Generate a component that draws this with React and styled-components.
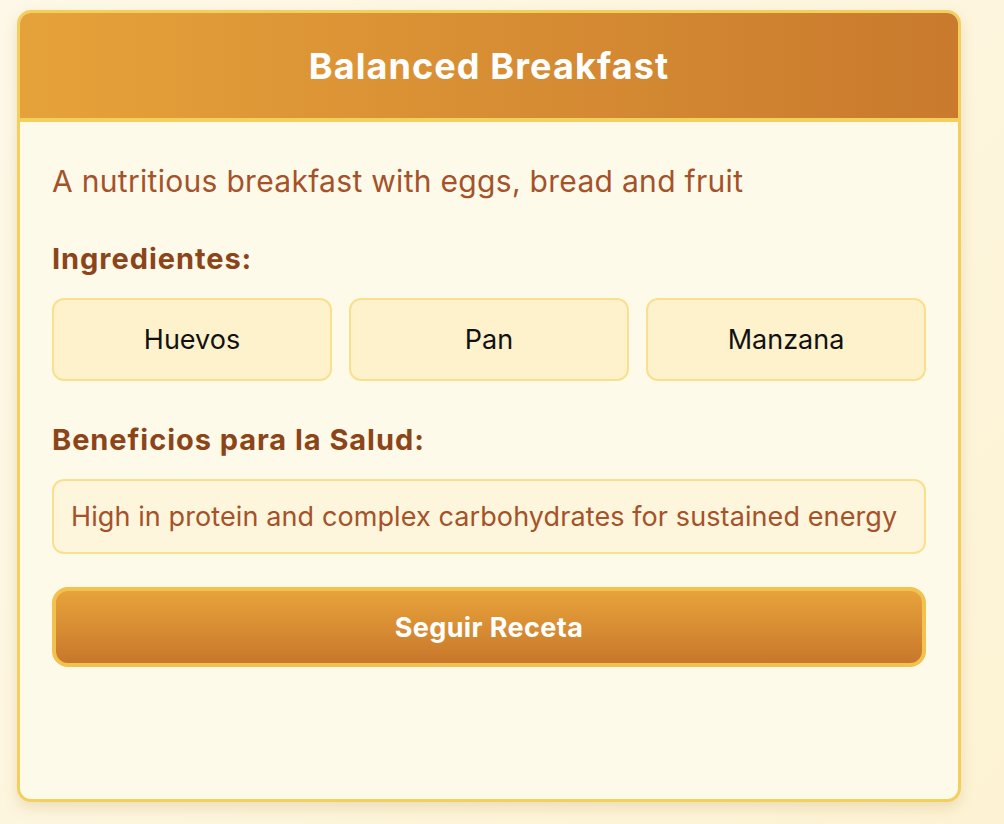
import styled, { createGlobalStyle } from 'styled-components';

const GlobalStyle = createGlobalStyle`
  html, body {
    margin: 0;
    padding: 0;
  }
  body {
    min-height: 824px;
    background: linear-gradient(135deg, #fdf8e8 0%, #fdf3d4 100%);
    font-family: Inter, 'Noto Sans', 'Liberation Sans', sans-serif;
  }
`;

const Page = styled.div`
  padding: 10px 0 0 17px;
`;

const Card = styled.div`
  width: 944px;
  height: 792px;
  box-sizing: border-box;
  border: 3px solid #f3cf5e;
  border-radius: 14px;
  background: #fefaea;
  overflow: hidden;
  box-shadow: 0 6px 14px rgba(180, 140, 60, 0.22);
  display: flex;
  flex-direction: column;
`;

const Header = styled.div`
  height: 105px;
  flex-shrink: 0;
  display: flex;
  align-items: center;
  justify-content: center;
  background: linear-gradient(90deg, #e6a23a 0%, #c97a2d 100%);
  border-bottom: 4px solid #f3cf5e;
`;

const Title = styled.h1`
  margin: 0;
  color: #fff;
  font-size: 36px;
  font-weight: 700;
  letter-spacing: 1.1px;
`;

const Body = styled.div`
  padding: 40px 32px 32px;
  display: flex;
  flex-direction: column;
`;

const Description = styled.p`
  margin: 0 0 40px;
  color: #a5522a;
  font-size: 30px;
  letter-spacing: 0.3px;
  line-height: 38px;
`;

const SectionTitle = styled.h2`
  margin: 0 0 20px;
  color: #8b4519;
  font-size: 29px;
  font-weight: 700;
  letter-spacing: 0.95px;
  line-height: 38px;
`;

const ChipGrid = styled.div`
  display: grid;
  grid-template-columns: repeat(3, 1fr);
  gap: 17px;
  margin-bottom: 40px;
`;

const Chip = styled.div`
  height: 83px;
  box-sizing: border-box;
  display: flex;
  align-items: center;
  justify-content: center;
  background: #fdf2cc;
  border: 2px solid #f8e08e;
  border-radius: 12px;
  color: #111;
  font-size: 27px;
`;

const Benefit = styled.div`
  height: 75px;
  box-sizing: border-box;
  display: flex;
  align-items: center;
  padding: 0 17px;
  background: #fdf6dc;
  border: 2px solid #f8e08e;
  border-radius: 12px;
  color: #a5522a;
  font-size: 27px;
  letter-spacing: 0.1px;
  margin-bottom: 33px;
`;

const Button = styled.button`
  height: 80px;
  width: 100%;
  box-sizing: border-box;
  border: 4px solid #f2c14e;
  border-radius: 16px;
  background: linear-gradient(180deg, #e8a33b 0%, #c8772b 100%);
  color: #fff;
  font-family: inherit;
  font-size: 27px;
  font-weight: 700;
  letter-spacing: 0.4px;
  cursor: pointer;
`;

const ingredients = ['Huevos', 'Pan', 'Manzana'];

export default function App() {
  return (
    <>
      <GlobalStyle />
      <Page>
        <Card>
          <Header>
            <Title>Balanced Breakfast</Title>
          </Header>
          <Body>
            <Description>A nutritious breakfast with eggs, bread and fruit</Description>
            <SectionTitle>Ingredientes:</SectionTitle>
            <ChipGrid>
              {ingredients.map((item) => (
                <Chip key={item}>{item}</Chip>
              ))}
            </ChipGrid>
            <SectionTitle>Beneficios para la Salud:</SectionTitle>
            <Benefit>High in protein and complex carbohydrates for sustained energy</Benefit>
            <Button>Seguir Receta</Button>
          </Body>
        </Card>
      </Page>
    </>
  );
}
